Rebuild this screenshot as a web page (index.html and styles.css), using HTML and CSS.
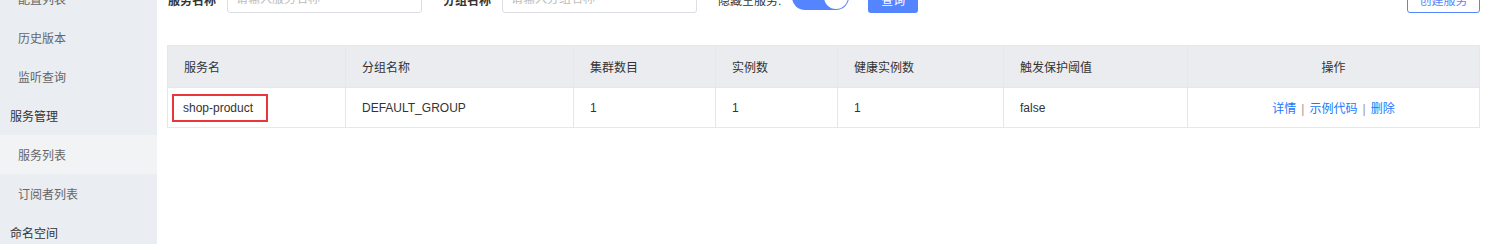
FILE: index.html
```html
<!DOCTYPE html>
<html lang="zh-CN">
<head>
  <meta charset="UTF-8" />
  <title>服务列表</title>
  <link rel="stylesheet" href="styles.css">
</head>
<body>
  <div class="layout">
    <!-- Menu latéral -->
    <aside class="sidebar">
      <div class="menu-item">配置列表</div>
      <div class="menu-item">历史版本</div>
      <div class="menu-item">监听查询</div>
      <div class="menu-group">服务管理</div>
      <div class="menu-item active">服务列表</div>
      <div class="menu-item">订阅者列表</div>
      <div class="menu-group">命名空间</div>
    </aside>

    <main class="content">
      <div class="search-bar">
        <label class="field-label">服务名称</label>
        <input type="text" class="field-input" placeholder="请输入服务名称" />
        <label class="field-label second">分组名称</label>
        <input type="text" class="field-input" placeholder="请输入分组名称" />
        <label class="switch-label">隐藏空服务:</label>
        <span class="switch"><span class="knob"></span></span>
        <button class="btn-primary">查询</button>
        <button class="btn-outline">创建服务</button>
      </div>

      <table class="service-table">
        <thead>
          <tr>
            <th class="col-name">服务名</th>
            <th class="col-group">分组名称</th>
            <th class="col-cluster">集群数目</th>
            <th class="col-inst">实例数</th>
            <th class="col-healthy">健康实例数</th>
            <th class="col-threshold">触发保护阈值</th>
            <th class="col-ops">操作</th>
          </tr>
        </thead>
        <tbody>
          <tr>
            <td><span class="highlight">shop-product</span></td>
            <td>DEFAULT_GROUP</td>
            <td>1</td>
            <td>1</td>
            <td>1</td>
            <td>false</td>
            <td class="ops">
              <a href="#">详情</a><span class="sep">|</span><a href="#">示例代码</a><span class="sep">|</span><a href="#">删除</a>
            </td>
          </tr>
        </tbody>
      </table>
    </main>
  </div>
</body>
</html>
```

FILE: styles.css
```css
* {
  box-sizing: border-box;
}

body {
  margin: 0;
  background-color: #fff;
  color: #333;
  font-family: 'Liberation Sans', 'Noto Sans CJK SC', sans-serif;
  font-size: 12px;
  overflow: hidden;
}

.layout {
  display: flex;
  height: 244px;
}

.sidebar {
  width: 157px;
  flex-shrink: 0;
  background-color: #eaedf1;
  margin-top: -21px;
  height: 265px;
}

.menu-item,
.menu-group {
  height: 39px;
  padding-top: 3px;
  line-height: 36px;
}

.menu-item {
  padding-left: 18px;
  color: #666;
}

.menu-item.active {
  background-color: #f2f3f5;
}

.menu-group {
  padding-left: 10px;
  color: #333;
}

.content {
  flex: 1;
  padding: 0 8px 0 10px;
}

.search-bar {
  display: flex;
  align-items: center;
  height: 28px;
  margin-top: -15px;
  padding-left: 1px;
}

.field-label {
  font-weight: bold;
  color: #333;
  margin-right: 11px;
}

.field-label.second {
  margin-left: 21px;
}

.field-input {
  width: 195px;
  height: 28px;
  border: 1px solid #dcdee3;
  border-radius: 3px;
  padding: 0 8px;
  font-family: inherit;
  font-size: 12px;
}

.field-input::placeholder {
  color: #bbb;
}

.switch-label {
  margin-left: 21px;
  margin-right: 11px;
  color: #333;
}

.switch {
  display: flex;
  align-items: center;
  justify-content: flex-end;
  width: 57px;
  height: 26px;
  border-radius: 13px;
  background-color: #5584ff;
  padding-right: 1px;
  margin-top: -4px;
}

.knob {
  width: 24px;
  height: 24px;
  border-radius: 50%;
  background-color: #fff;
}

.btn-primary {
  margin-left: 19px;
  width: 50px;
  height: 28px;
  border: none;
  border-radius: 3px;
  background-color: #5584ff;
  color: #fff;
  font-family: inherit;
  font-size: 12px;
}

.btn-outline {
  margin-left: auto;
  width: 73px;
  height: 28px;
  border: 1px solid #5584ff;
  border-radius: 3px;
  background-color: #fff;
  color: #5584ff;
  font-family: inherit;
  font-size: 12px;
}

.service-table {
  width: 100%;
  margin-top: 32px;
  border-collapse: collapse;
  border: 1px solid #e6e7eb;
}

.service-table th,
.service-table td {
  border: 1px solid #e6e7eb;
  text-align: left;
  padding: 0 16px;
  font-weight: normal;
}

.service-table th {
  height: 42px;
  background-color: #ebecf0;
  color: #333;
}

.service-table td {
  height: 40px;
  color: #333;
}

.col-name { width: 178px; }
.col-group { width: 228px; }
.col-cluster { width: 142px; }
.col-inst { width: 122px; }
.col-healthy { width: 166px; }
.col-threshold { width: 184px; }

.service-table th.col-ops,
.service-table td.ops {
  text-align: center;
}

.highlight {
  display: inline-block;
  margin-left: -12px;
  padding: 6px 13px 6px 9px;
  border: 2px solid #e8363a;
  line-height: 12px;
}

.ops a {
  color: #2077ff;
  text-decoration: none;
}

.sep {
  color: #999;
  margin: 0 5px;
}
```
